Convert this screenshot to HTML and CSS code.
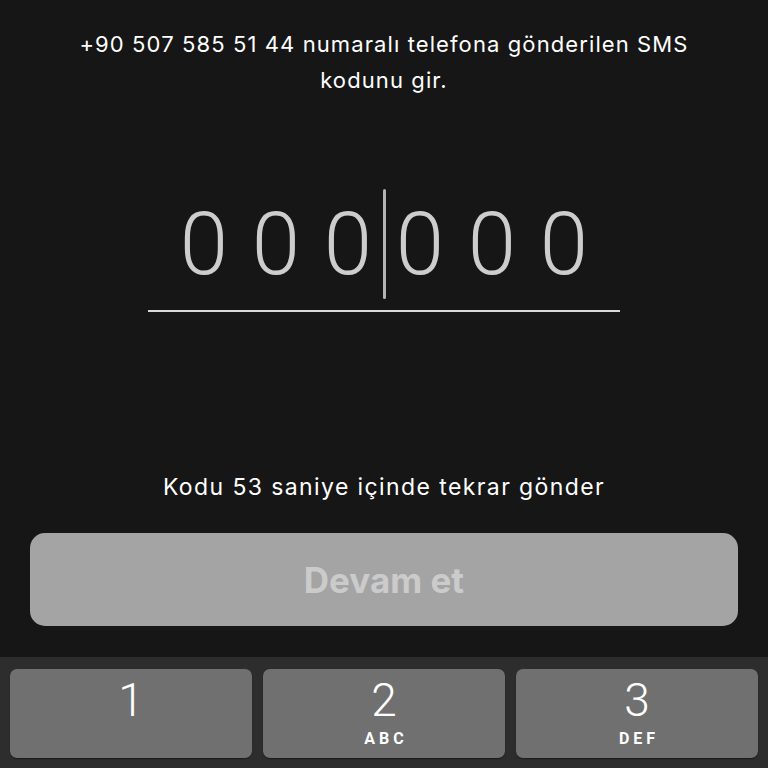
FILE: index.html
```html
<!DOCTYPE html>
<html lang="tr">
<head>
<meta charset="UTF-8" />
<meta name="viewport" content="width=device-width, initial-scale=1" />
<title>SMS Doğrulama</title>
<link rel="stylesheet" href="styles.css">
</head>
<body>

<div class="screen">
  <p class="intro">+90 507 585 51 44 numaralı telefona gönderilen SMS kodunu gir.</p>

  <div class="code">
    <div class="digits">
      <span class="digit">0</span>
      <span class="digit">0</span>
      <span class="digit">0</span>
      <span class="cursor"></span>
      <span class="digit">0</span>
      <span class="digit">0</span>
      <span class="digit">0</span>
    </div>
    <div class="underline"></div>
  </div>

  <p class="resend">Kodu 53 saniye içinde tekrar gönder</p>

  <button class="continue" disabled>Devam et</button>

  <div class="keypad">
    <div class="key"><span class="num">1</span></div>
    <div class="key"><span class="num">2</span><span class="letters">ABC</span></div>
    <div class="key"><span class="num">3</span><span class="letters">DEF</span></div>
  </div>
</div>

</body>
</html>
```

FILE: styles.css
```css
body {
  margin: 0;
  background: #161616;
  color: #fff;
  font-family: Inter, "Noto Sans", sans-serif;
}
.screen {
  height: 768px;
  display: flex;
  flex-direction: column;
  overflow: hidden;
}
.intro {
  margin: 26px 60px 0;
  font-size: 22px;
  letter-spacing: 1.1px;
  line-height: 36px;
  text-align: center;
}
.code {
  margin-top: 91px;
  display: flex;
  flex-direction: column;
  align-items: center;
}
.digits {
  display: flex;
  height: 110px;
  align-items: center;
}
.digit {
  width: 72px;
  text-align: center;
  font-family: Roboto, sans-serif;
  font-weight: 300;
  font-size: 87px;
  line-height: 110px;
  color: #cdcdcd;
}
.cursor {
  width: 3px;
  height: 110px;
  margin: 0 -1.5px;
  border-radius: 2px;
  background: #b4b4b4;
}
.underline {
  margin-top: 11px;
  width: 472px;
  height: 2px;
  background: #d9d9d9;
}
.resend {
  margin: 160px 0 0;
  font-size: 23px;
  letter-spacing: 1.4px;
  line-height: 30px;
  text-align: center;
}
.continue {
  margin: 31px 30px 0;
  height: 93px;
  border: none;
  border-radius: 15px;
  background: #a4a4a4;
  color: #cbcbcb;
  font-family: Inter, sans-serif;
  font-weight: 700;
  font-size: 35px;
}
.keypad {
  margin-top: auto;
  height: 111px;
  box-sizing: border-box;
  padding: 12px 10px 0;
  background: #2d2d2d;
  display: grid;
  grid-template-columns: repeat(3, 1fr);
  gap: 11px;
  align-items: start;
}
.key {
  height: 89px;
  border-radius: 7px;
  background: #707070;
  box-shadow: 0 1px 1px #1a1a1a;
  display: flex;
  flex-direction: column;
  align-items: center;
  font-family: Roboto, sans-serif;
}
.num {
  margin-top: 5px;
  font-size: 46px;
  font-weight: 300;
  line-height: 52px;
}
.letters {
  margin-top: 3px;
  margin-left: 4px;
  font-size: 16px;
  font-weight: 700;
  letter-spacing: 4px;
  line-height: 20px;
}
```
